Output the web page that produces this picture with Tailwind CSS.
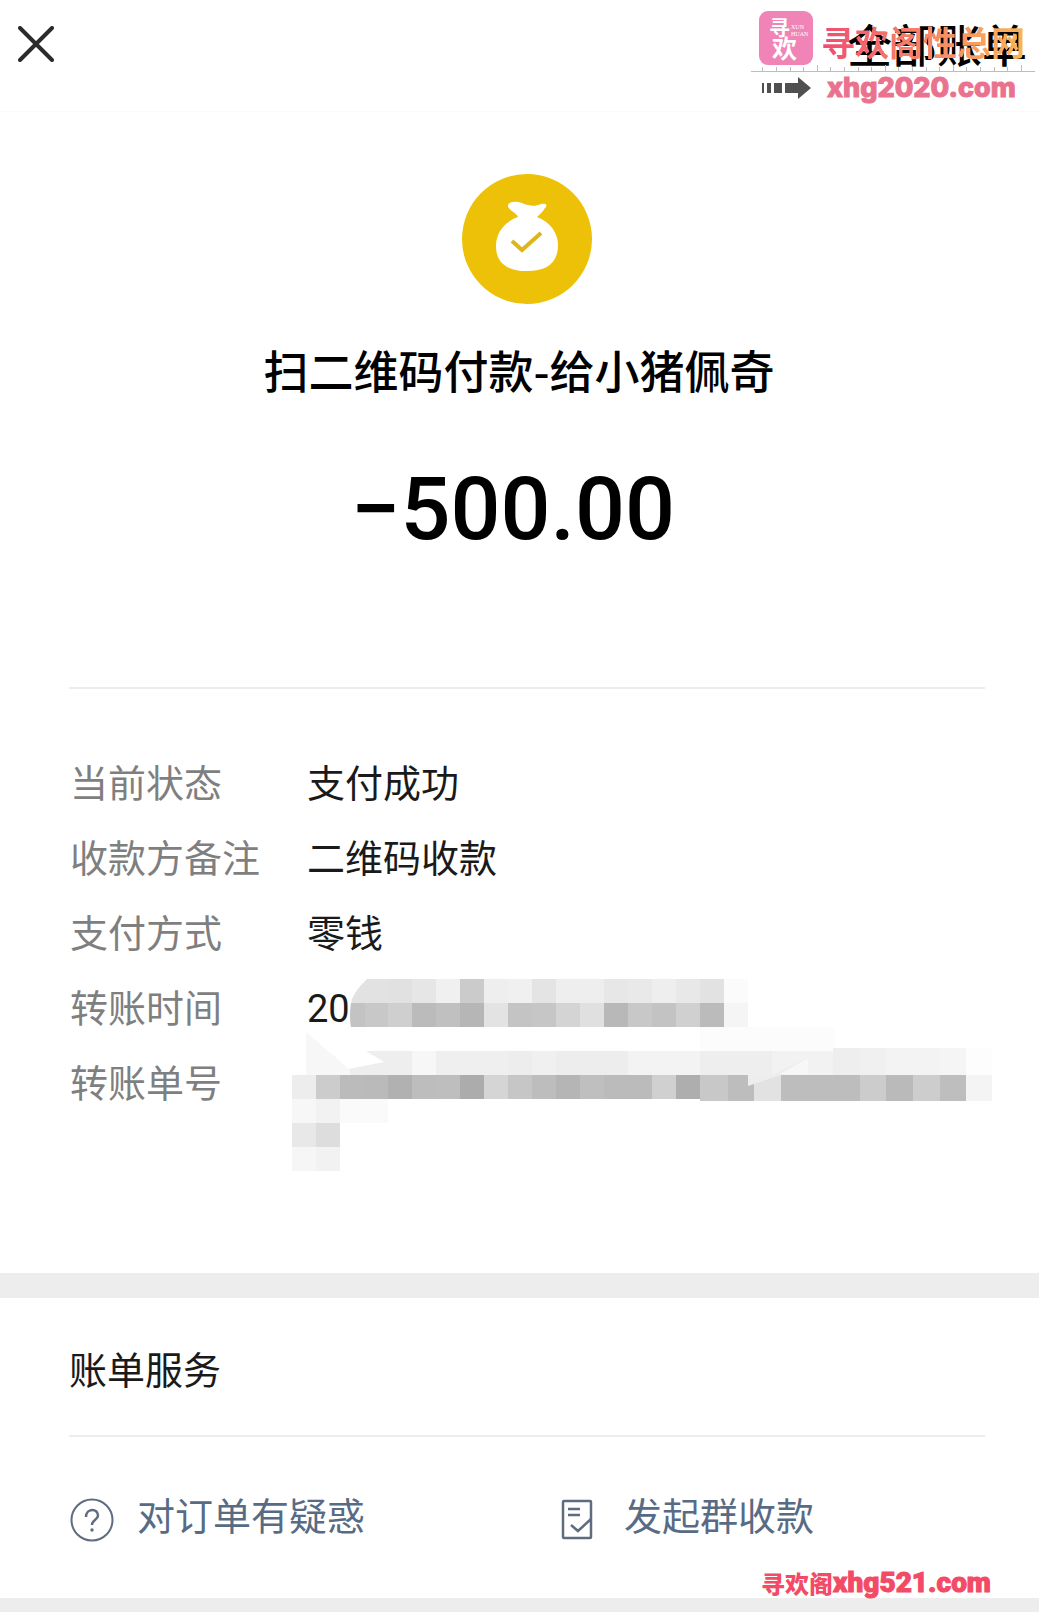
<!DOCTYPE html>
<html lang="zh-CN">
<head>
  <meta charset="UTF-8">
  <meta name="viewport" content="width=device-width, initial-scale=1.0">
  <title>账单详情</title>
  <script src="https://cdn.jsdelivr.net/npm/@tailwindcss/browser@4"></script>
</head>
<body class="bg-[#ededed] min-h-screen font-['Noto_Sans_CJK_SC',sans-serif] text-[#1a1a1a]">

  <!-- Top bar -->
  <header class="relative flex items-center justify-between h-28 pl-[18px] pr-3 pb-6 bg-white border-b border-[#fafafa]">
    <button type="button" aria-label="关闭" class="w-9 h-9">
      <svg viewBox="0 0 36 36" class="w-9 h-9" fill="none" stroke="#2b2b2b" stroke-width="4" stroke-linecap="round">
        <path d="M2 2L34 34M34 2L2 34"/>
      </svg>
    </button>
    <a href="#" class="text-[45px] leading-none font-medium text-black">全部账单</a>

    <!-- Site stamp over the bar -->
    <div class="absolute top-[7px] right-1 w-72">
      <div class="flex items-center gap-2 pl-3 pt-1">
        <svg viewBox="0 0 54 54" class="w-[54px] h-[54px] shrink-0">
          <rect width="54" height="54" rx="9" fill="#f084b6"/>
          <g fill="#fff" font-family="'Noto Sans CJK SC', sans-serif" font-weight="700">
            <text x="10" y="24" font-size="21">寻</text>
            <text x="13" y="47" font-size="25">欢</text>
          </g>
          <g fill="#fff" font-family="'Liberation Serif', serif" font-size="6">
            <text x="32" y="18">XUN</text>
            <text x="32" y="25">HUAN</text>
          </g>
        </svg>
        <p class="mt-2 text-[34px] leading-9 font-bold whitespace-nowrap bg-linear-to-r from-[#f04a70] to-[#f8b455] bg-clip-text text-transparent">寻欢阁性总网</p>
      </div>
      <svg viewBox="0 0 288 8" class="block w-72 h-2" fill="none" stroke="#bdbdbd">
        <path d="M4 6.5H288"/>
        <path d="M15.500 2V6M29.500 2V6M43.500 2V6M56.500 2V6M70.500 0V6M83.500 2V6M97.500 2V6M111.500 2V6M124.500 2V6M138.500 0V6M151.500 2V6M165.500 2V6M179.500 2V6M192.500 2V6M206.500 0V6M219.500 2V6M233.500 2V6M247.500 2V6M260.500 2V6M274.500 0V6"/>
      </svg>
      <div class="flex items-center gap-4 pl-3.5 pt-px">
        <svg viewBox="0 0 50 22" class="w-[50px] h-[22px] shrink-0" fill="#505050">
          <path d="M1 6h2v10h-2zM6 6h4v10h-4zM13 6h8v10h-8zM24 6h13V0L50 11L37 22V16H24z"/>
        </svg>
        <p class="font-['Inter',sans-serif] text-[27px] leading-7 font-extrabold text-[#ea728e] [-webkit-text-stroke:1px_#ea728e]">xhg2020.com</p>
      </div>
    </div>
  </header>

  <main>
    <!-- Payment summary -->
    <section class="bg-white pl-[69px] pr-[54px] pt-[62px] pb-[155px]">
      <div class="flex flex-col items-center">
        <svg viewBox="0 0 130 130" class="w-[130px] h-[130px]">
          <circle cx="65" cy="65" r="65" fill="#ecc107"/>
          <path fill="#fff" d="M46 32C46 27 55 27 60 29C67 32 73 33 79 30C84 29 86 31 83 34C81 38 77 41 75 43C89 48 96 60 96 71C96 89 85 97 65 97C45 97 34 89 34 72C34 59 42 48 56 43C55 39 46 36 46 32Z"/>
          <path fill="none" stroke="#dfb51d" stroke-width="4" d="M50 67L60 76L79 59"/>
        </svg>
        <h1 class="mt-[38px] pr-4 text-[45px] leading-[56px] font-medium text-black">扫二维码付款-给小猪佩奇</h1>
        <p class="mt-[63px] pr-7 font-['Roboto',sans-serif] text-[88px] leading-[96px] font-medium text-black">−500.00</p>
      </div>

      <hr class="mt-[130px] border-t-2 border-[#ececec]">

      <!-- Details -->
      <dl class="relative mt-[54px] pl-px grid grid-cols-[237px_1fr] text-[38px] leading-[75px]">
        <dt class="text-[#7f7f7f]">当前状态</dt>
        <dd>支付成功</dd>
        <dt class="text-[#7f7f7f]">收款方备注</dt>
        <dd>二维码收款</dd>
        <dt class="text-[#7f7f7f]">支付方式</dt>
        <dd>零钱</dd>
        <dt class="text-[#7f7f7f]">转账时间</dt>
        <dd class="h-[75px]"><span class="font-['Roboto',sans-serif]">20</span></dd>
        <dt class="text-[#7f7f7f]">转账单号</dt>
        <dd></dd>
        <!-- Mosaic over time and order number -->
        <svg id="mosaic" viewBox="290 979 704 194" class="absolute left-[221px] top-[236px] w-[704px] h-[194px]" shape-rendering="crispEdges" aria-hidden="true"></svg>
      </dl>
    </section>

    <!-- Bill services -->
    <section class="mt-[25px] bg-white pl-[69px] pr-[54px] pt-[42px] pb-[54px]">
      <h2 class="text-[38px] leading-[56px]">账单服务</h2>
      <hr class="mt-[39px] border-t-2 border-[#ececec]">
      <div class="mt-[47px] grid grid-cols-[491px_1fr] text-[38px] leading-[60px] text-[#586b84]">
        <a href="#" class="flex items-center gap-[22px]">
          <svg viewBox="0 0 46 46" class="w-[46px] h-[46px] mt-3" fill="none" stroke="#5f6c80" stroke-width="2">
            <circle cx="23" cy="23" r="20.500"/>
            <path stroke-width="2.500" d="M17 20C17 11 29 11 29 18.500C29 23 23 22.500 23 28"/>
            <circle cx="23" cy="33" r="1.700" fill="#5f6c80" stroke="none"/>
          </svg>
          <span>对订单有疑惑</span>
        </a>
        <a href="#" class="flex items-center gap-[30px]">
          <svg viewBox="0 0 34 42" class="w-[34px] h-[42px] mt-3" fill="none" stroke="#5f6c80" stroke-width="2.500">
            <rect x="3" y="2" width="28" height="37" rx="1"/>
            <path d="M8 10H20M8 16H20M11 26L18 32L31 20"/>
          </svg>
          <span>发起群收款</span>
        </a>
      </div>
    </section>
  </main>

  <p class="absolute top-[1565px] right-12 flex items-center text-[24px] leading-9 font-black text-[#f34a66]">
    <span>寻欢阁</span><span class="font-['Roboto',sans-serif] text-[28px] [-webkit-text-stroke:1px_#f34a66]">xhg521.com</span>
  </p>

  <script>
    // Mosaic rows: y, height, list of [x, width, gray]
    const rows = [
      [979, 24, [[350,38,226],[388,24,225],[412,24,230],[436,24,240],[460,24,203],[484,24,238],[508,24,240],[532,24,228],[556,48,238],[604,24,231],[628,24,233],[652,24,238],[676,24,232],[700,24,226],[724,24,251]]],
      [1003, 24, [[350,15,195],[365,23,200],[388,24,207],[412,24,187],[436,24,192],[460,24,182],[484,24,227],[508,24,196],[532,24,198],[556,24,212],[580,24,224],[604,24,184],[628,24,200],[652,24,195],[676,24,208],[700,24,187],[724,24,245]]],
      [1027, 24, [[700,134,252]]],
      [1051, 24, [[332,80,238],[412,24,247],[436,72,239],[508,24,237],[532,24,240],[556,72,237],[628,72,243],[700,72,238],[772,61,242]]],
      [1048, 27, [[833,27,238],[860,26,240],[886,54,243],[940,26,245],[966,26,253]]],
      [1075, 24, [[292,24,237],[316,24,204],[340,24,187],[364,24,186],[388,24,177],[412,24,189],[436,24,190],[460,24,172],[484,24,213],[508,24,198],[532,24,189],[556,24,181],[580,24,191],[604,48,187],[652,24,208],[676,24,174]]],
      [1075, 26, [[700,28,200],[728,26,189],[754,27,226],[781,79,189],[860,26,204],[886,27,186],[913,27,205],[940,26,190],[966,26,244]]],
      [1099, 24, [[292,24,247],[316,24,242],[340,48,250]]],
      [1123, 24, [[292,24,232],[316,24,221]]],
      [1147, 24, [[292,24,246],[316,24,242]]]
    ];

    let shapes = "";
    rows.forEach(([y, h, cells]) => {
      cells.forEach(([x, w, g]) => {
        shapes += `<rect x="${x}" y="${y}" width="${w}" height="${h}" fill="rgb(${g},${g},${g})"/>`;
      });
    });
    // Brush edges
    shapes += '<g shape-rendering="auto"><path fill="#fff" d="M349 978H368Q353 992 351 1003Q349 1015 351 1028H349z"/>'
      + '<path fill="#f7f7f7" d="M306 1032L350 1070V1075H306z"/>'
      + '<path fill="#fff" d="M306 1030L366 1051L384 1062L348 1069z"/>'
      + '<path fill="#ededed" d="M748 1074L772 1075L807 1058V1062L781 1075L748 1086z"/>'
      + '<path fill="#f7f7f7" d="M780 1074L808 1058V1074z"/></g>';
    document.getElementById("mosaic").innerHTML = shapes;
  </script>
</body>
</html>
